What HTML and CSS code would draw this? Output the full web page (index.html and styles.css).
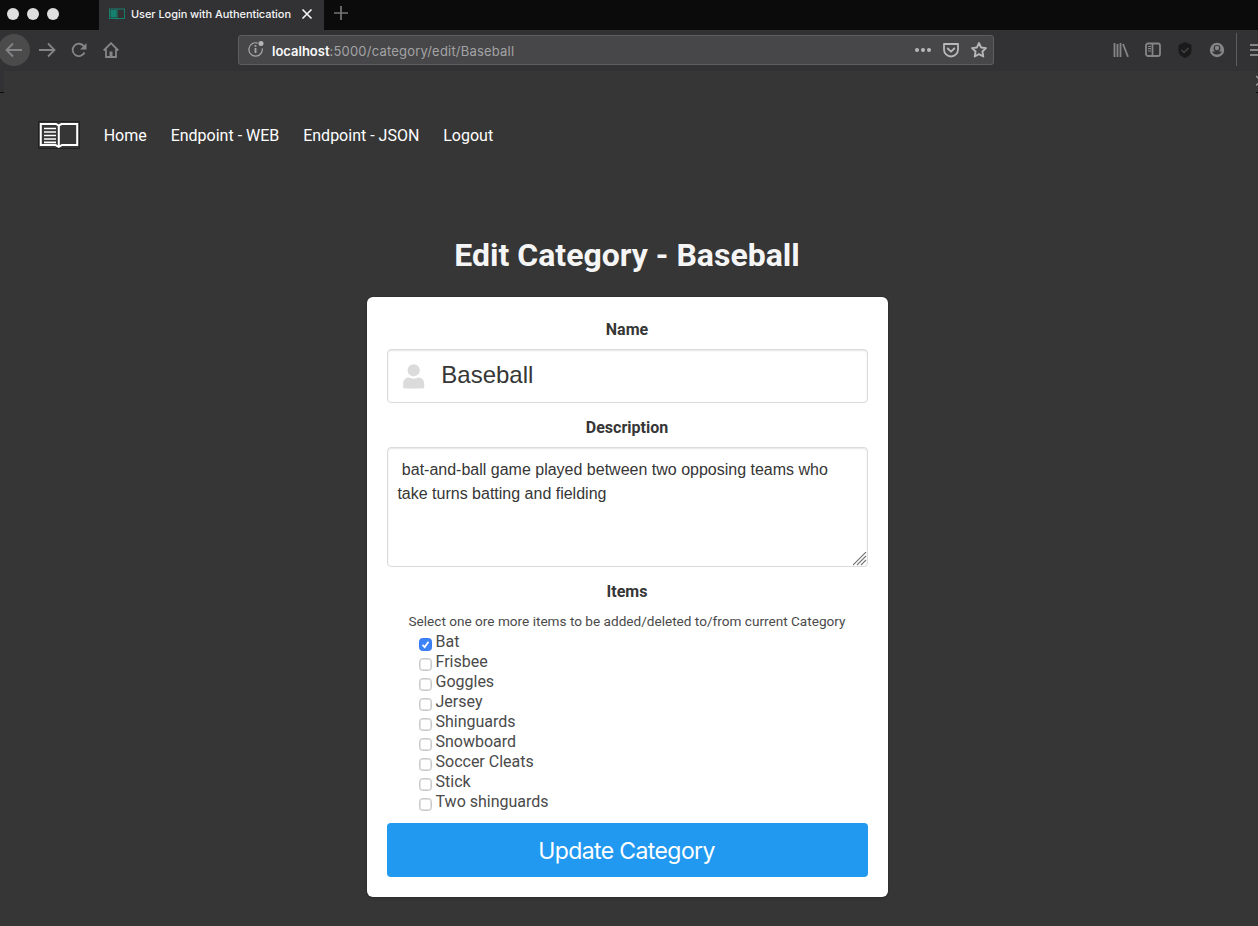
FILE: index.html
```html
<!DOCTYPE html>
<html lang="en">
<head>
<meta charset="utf-8">
<title>User Login with Authentication</title>
<link rel="stylesheet" href="styles.css">
</head>
<body>
<div class="tabs">
  <div class="lights"><i></i><i></i><i></i></div>
  <div class="tab">
    <svg class="favicon" width="16" height="12" viewBox="0 0 16 12" fill="none" stroke="#16806f"><rect x=".5" y="1" width="15" height="9.5"/><path d="M8 1v10.500"/><path fill="#16806f" d="M2 2.500h5v6.500H2z"/></svg>
    <span class="tab-title">User Login with Authentication</span>
    <svg class="close" width="12" height="12" viewBox="0 0 12 12" fill="none" stroke="#f0f0f0" stroke-width="1.700"><path d="M1.500 1.500l9 9M10.500 1.500l-9 9"/></svg>
  </div>
  <svg class="plus" width="14" height="14" viewBox="0 0 14 14" stroke="#777" stroke-width="1.700"><path d="M7 0v14M0 7h14"/></svg>
</div>
<div class="toolbar">
  <div class="nav-icons">
    <span class="back"><svg width="18" height="16" viewBox="0 0 18 16"><path d="M17 8H2M8 1.500L1.500 8 8 14.500"/></svg></span>
    <svg class="fwd" width="18" height="16" viewBox="0 0 18 16"><path d="M1 8h15M10 1.500L16.500 8 10 14.500"/></svg>
    <svg class="reload" width="16" height="16" viewBox="0 0 16 16"><path d="M13.500 10.500a6.200 6.200 0 1 1-.6-6.200"/><path class="solid" d="M15.500 1v6.500H9z"/></svg>
    <svg class="house" width="16" height="16" viewBox="0 0 16 16"><path d="M.7 8.500L8 1.200l7.300 7.300M3 7v8h10V7"/><path class="solid" d="M6.500 9.500h3v5h-3z"/></svg>
  </div>
  <div class="urlbar">
    <svg class="info" width="18" height="18" viewBox="0 0 18 18" fill="none" stroke="#a8a8aa" stroke-width="1.200"><path d="M14.200 8.300A6.700 6.700 0 1 1 9.700 3.100"/><path stroke-width="1.800" d="M7.500 8v5M7.500 5v1.700"/><circle cx="13" cy="3.500" r="2.500" fill="#b5b5b7" stroke="none"/></svg>
    <span class="url"><b>localhost</b>:5000/category/edit/Baseball</span>
    <span class="url-icons">
      <svg width="16" height="16" viewBox="0 0 16 16" fill="#b8b8ba"><circle cx="2" cy="8" r="2"/><circle cx="8" cy="8" r="2"/><circle cx="14" cy="8" r="2"/></svg>
      <svg width="16" height="16" viewBox="0 0 16 16" fill="none" stroke="#b8b8ba" stroke-width="1.800" stroke-linejoin="round"><path d="M1 2h14v5.500a7 7 0 0 1-14 0z"/><path stroke-linecap="round" d="M4.700 6.500L8 9.700l3.300-3.200"/></svg>
      <svg width="16" height="16" viewBox="0 0 16 16" fill="none" stroke="#b8b8ba" stroke-width="1.800" stroke-linejoin="round"><path d="M8 1l2.100 4.500 4.900.6-3.600 3.400.9 5L8 12.100l-4.300 2.400.9-5L1 6.100l4.900-.6z"/></svg>
    </span>
  </div>
  <div class="tools">
    <svg width="16" height="16" viewBox="0 0 16 16" fill="none" stroke="#858587" stroke-width="1.800"><path d="M1.500 1v14M4.500 2v13M7.500 1v14M10 2l5 12.800"/></svg>
    <svg width="16" height="16" viewBox="0 0 16 16" fill="none" stroke="#858587" stroke-width="1.800"><rect x="1" y="1.500" width="14" height="12.500" rx="2"/><path d="M7.500 2v12"/><path stroke-width="1.200" d="M3 4.500h3M3 6.700h3M3 9h3"/></svg>
    <svg width="16" height="16" viewBox="0 0 16 16"><path fill="#1a1a1b" d="M8 0l6.500 3v6c0 3.500-3 5.500-6.500 7-3.500-1.500-6.500-3.500-6.500-7V3z"/><path fill="none" stroke="#444446" stroke-width="1.500" d="M4.500 8l2.500 2.500L11.500 6"/></svg>
    <svg width="16" height="16" viewBox="0 0 16 16"><circle cx="8" cy="8" r="7.200" fill="#858587"/><circle cx="8" cy="6.300" r="3.400" fill="#323234"/><circle cx="8" cy="6" r="2.200" fill="#858587"/><path fill="#323234" d="M3.300 9.300c1.300.2 2 .3 2.900 0h3.600c.9.300 1.600.2 2.900 0-.8 4.300-8.600 4.300-9.400 0z"/></svg>
  </div>
  <svg class="menu" width="8" height="16" viewBox="0 0 8 16" stroke="#858587" stroke-width="1.800"><path d="M0 3h8M0 8h8M0 13h8"/></svg>
</div>
<main class="page">
  <div class="page-top"><i class="rule"></i><svg width="2" height="22" viewBox="0 0 2 22"><path d="M.2 5l1.800 2M.2 14.500L2 12.500" stroke="#999" stroke-width="1.500"/><path d="M0 21.500h2" stroke="#0c0c0d"/></svg></div>
  <nav class="menu-bar">
    <svg class="logo" width="42" height="28" viewBox="0 0 42 28"><path fill="#363636" stroke="#202020" d="M.5.5h41v27H.5z"/><path fill="#363636" stroke="#fff" stroke-width="2" d="M2.800 3H18l2.700 1.500L23.500 3h15.700v21H24l-3.200 1.800L17.500 24H2.800z"/><path stroke="#fff" stroke-width="2" d="M20.800 4v22"/><path stroke="#fff" stroke-width="1.700" d="M6 7.500h12M6 11h12M6 14.500h12M6 18h12M6 21.300h12"/></svg>
    <a>Home</a><a>Endpoint - WEB</a><a>Endpoint - JSON</a><a>Logout</a>
  </nav>
  <h1 class="title"><span>Edit Category - Baseball</span></h1>
  <form class="box">
    <div class="label">Name</div>
    <div class="field name">
      <svg width="22" height="25" viewBox="0 0 22 25" fill="#dbdbdb"><circle cx="10.700" cy="6.300" r="6.100"/><path d="M5.700 13.500c3 1.500 7 1.500 10 0 3 0 5.500 2.500 5.500 6v3.200c0 1.200-.8 1.900-2 1.900h-17c-1.200 0-2-.7-2-1.900v-3.200c0-3.500 2.500-6 5.500-6z"/></svg>
      <span>Baseball</span>
    </div>
    <div class="label">Description</div>
    <div class="field desc"><p>&nbsp;bat-and-ball game played between two opposing teams who<br>take turns batting and fielding</p>
      <svg class="grip" width="14" height="14" viewBox="0 0 14 14" stroke="#777" stroke-width="1.100"><path d="M0 13L13 0M4 13l9-9M8 13l5-5"/></svg>
    </div>
    <div class="label items">Items</div>
    <p class="help">Select one ore more items to be added/deleted to/from current Category</p>
    <ul class="list">
      <li><i class="check on"><svg width="11" height="11" viewBox="0 0 11 11" fill="none" stroke="#fff" stroke-width="1.700"><path d="M2.500 5.800l2.200 2.300L8.500 2.800"/></svg></i>Bat</li>
      <li><i class="check"></i>Frisbee</li>
      <li><i class="check"></i>Goggles</li>
      <li><i class="check"></i>Jersey</li>
      <li><i class="check"></i>Shinguards</li>
      <li><i class="check"></i>Snowboard</li>
      <li><i class="check"></i>Soccer Cleats</li>
      <li><i class="check"></i>Stick</li>
      <li><i class="check"></i>Two shinguards</li>
    </ul>
    <div class="button"><span>Update Category</span></div>
  </form>
</main>
</body>
</html>
```
FILE: styles.css
```css
* { box-sizing: border-box; }
body { margin: 0; width: 1258px; height: 926px; overflow: hidden; background: #363636; font-family: Roboto, sans-serif; }
svg { display: block; flex: none; }
.tabs { height: 30px; background: #0b0b0b; display: flex; align-items: center; }
.lights { width: 99px; padding: 0 0 2px 7px; display: flex; gap: 8px; }
.lights i { width: 12px; height: 12px; border-radius: 50%; background: #dedede; }
.tab { width: 225px; height: 30px; padding: 0 11px 2px 10px; background: #323234; display: flex; align-items: center; }
.tab-title { width: 170px; margin-left: 6px; font: 500 11px/16px Inter, sans-serif; letter-spacing: -.06px; color: #f4f4f4; white-space: nowrap; }
.close { margin-left: auto; }
.plus { margin: -4px 0 0 10px; }
.toolbar { height: 41px; background: #323234; display: flex; align-items: flex-start; }
.nav-icons { width: 238px; height: 41px; display: flex; color: #858587; }
.nav-icons svg { fill: none; stroke: currentColor; stroke-width: 1.8; }
.nav-icons .solid { fill: currentColor; stroke: none; }
.back { width: 32px; height: 32px; margin: 4px 0 0 -2px; border-radius: 50%; background: #4b4b4b; display: flex; align-items: center; padding-left: 7px; }
.fwd { margin: 12px 0 0 8px; }
.reload { margin: 12px 0 0 15px; }
.house { margin: 12px 0 0 16px; }
.urlbar { width: 756px; height: 30px; margin-top: 5px; padding: 0 6px 0 9px; border: 1px solid #5e5e60; border-radius: 3px; background: #474749; display: flex; align-items: center; }
.info { margin-top: -2px; }
.url { margin: 2px 0 0 6px; font: 400 13px/20px Inter, sans-serif; letter-spacing: .2px; color: #a3a3a5; white-space: nowrap; }
.url b { font-weight: 600; letter-spacing: 0; color: #f9f9fa; }
.url-icons { margin-left: auto; display: flex; gap: 12px; }
.tools { width: 243px; height: 33px; margin-top: 3px; padding: 9px 0 0 119px; border-right: 1px solid #5c5c5e; display: flex; gap: 16px; }
.menu { margin: 12px 0 0 13px; }
.page-top { height: 22px; display: flex; justify-content: space-between; align-items: flex-end; }
.rule { width: 4px; height: 22px; border-bottom: 1px solid #0c0c0d; background: #323234; }
.menu-bar { height: 84px; padding-left: 38px; display: flex; align-items: center; font-size: 16px; color: #fff; }
.menu-bar a { margin-right: 23.9px; white-space: nowrap; }
.logo { margin-right: 23.7px; }
.title { height: 48px; margin: 54px 4px 18px 0; display: flex; justify-content: center; font: 700 32px/48px Roboto, sans-serif; color: #f5f5f5; white-space: nowrap; }
.box { width: 521px; height: 600px; margin: 0 auto 0 367px; padding: 20px; background: #fff; border-radius: 6px; box-shadow: 0 2px 3px rgba(10,10,10,.1), 0 0 0 1px rgba(10,10,10,.1); color: #363636; }
.label { height: 24px; margin-bottom: 8px; padding-right: 1px; font-weight: 700; font-size: 16px; line-height: 26px; text-align: center; }
.field { border: 1px solid #dbdbdb; border-radius: 4px; box-shadow: inset 0 1px 2px rgba(10,10,10,.1); margin-bottom: 12px; font-family: "Liberation Sans", sans-serif; white-space: nowrap; }
.name { height: 54px; padding: 0 15px; display: flex; align-items: center; font-size: 24px; }
.name span { margin: -2px 0 0 16.3px; }
.desc { position: relative; height: 120px; padding: 10px 9.4px; font-size: 16px; line-height: 24px; }
.desc p { margin: 0; }
.grip { position: absolute; right: 0; bottom: 0; }
.items { margin-bottom: 8px; }
.help { height: 20px; margin: 0 1px 0 0; font-size: 13.6px; line-height: 20px; color: #4a4a4a; white-space: nowrap; display: flex; justify-content: center; }
.list { list-style: none; margin: 1px 0 0; padding: 0 0 0 32px; height: 191px; font-size: 16px; line-height: 20px; color: #4a4a4a; }
.list li { height: 20px; display: flex; align-items: center; gap: 3.5px; }
.check { width: 13px; height: 13px; margin-top: 5px; border: 1.5px solid #c9c9c9; border-radius: 3.5px; background: #fff; box-shadow: inset 0 0 0 .7px #d6d6d6; }
.check.on { border: 1px solid #3478f6; background: #3b83f7; box-shadow: none; }
.button { height: 54px; padding: 2px 2px 0 0; border-radius: 4px; background: #2199f0; display: flex; justify-content: center; align-items: center; color: #fff; font: 400 23px/36px Inter, sans-serif; letter-spacing: -.6px; }
```
